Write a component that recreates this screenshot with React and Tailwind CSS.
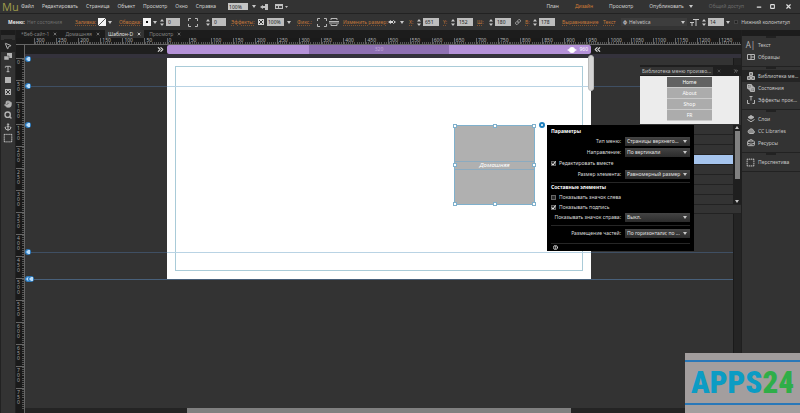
import { useState } from 'react';
import {
  Anchor,
  BriefcaseBusiness,
  ChevronsLeft,
  ChevronsRight,
  CircleHelp,
  Hand,
  Link,
  Minus,
  MousePointer2,
  Search,
  Square,
  SquareDashed,
  Type,
  X,
} from 'lucide-react';

const menuItems = ['Файл', 'Редактировать', 'Страница', 'Объект', 'Просмотр', 'Окно', 'Справка'];

const horizontalMarks = Array.from({ length: 32 }, (_, i) => Math.abs(i * 50 - 300));
const verticalMarks = Array.from({ length: 16 }, (_, i) => i * 50);

const Caret = () => (
  <svg viewBox="0 0 4 3" className="w-1 h-[3px] shrink-0" fill="#c8c8c8">
    <path d="M0 0h4L2 3z" />
  </svg>
);

const Stepper = () => (
  <svg viewBox="0 0 4 7" className="w-1 h-[7px] shrink-0" fill="#c8c8c8">
    <path d="M0 2.5L2 0l2 2.5zM0 4.5L2 7l2-2.5z" />
  </svg>
);

const Corners = () => (
  <svg viewBox="0 0 10 9" className="w-[10px] h-[9px] shrink-0" fill="none" stroke="#b8b8b8">
    <path d="M.5 3V.5H3M7 .5h2.5V3M9.5 6v2.500H7M3 8.500H.5V6" />
  </svg>
);

const NumberField = ({ label, value, width = 'w-4' }) => (
  <span className="flex items-center gap-[2px]">
    <Stepper />
    <input
      type="text"
      aria-label={label}
      defaultValue={value}
      className={`${width} h-2 bg-[#bdbdbd] text-[#222] px-[2px] leading-none outline-none`}
    />
  </span>
);

const Swatch = ({ label, children }) => (
  <button type="button" aria-label={label} className="flex items-center gap-[2px]">
    <svg viewBox="0 0 8 8" className="size-2" fill="#f4f4f4">
      <path d="M0 0h8v8H0z" />
      {children}
    </svg>
    <Caret />
  </button>
);

const OrangeLink = ({ className = '', children }) => (
  <a href="#" className={`text-[#c4773a] underline decoration-dotted decoration-[#80522f] shrink-0 ${className}`}>
    {children}
  </a>
);

const MenuBar = () => (
  <header className="h-[14px] flex items-center bg-[#333] border-b border-[#222] text-[#d0d0d0]">
    <span className="w-[21px] pl-[2px] text-[11px] leading-none text-[#98964a]">Mu</span>
    <nav className="flex gap-2">
      {menuItems.map((item) => (
        <button key={item} type="button">{item}</button>
      ))}
    </nav>
    <div className="flex items-center gap-1 ml-3">
      <input
        type="text"
        aria-label="Масштаб"
        defaultValue="100%"
        className="w-5 h-[7px] bg-[#c4c4c4] text-[#222] px-[1px] leading-none outline-none"
      />
      <Caret />
      <svg viewBox="0 0 32 6" className="w-8 h-[6px]" fill="#c0c0c0">
        <path d="M0 3l3-2v4zM3 2h2v2H3zM5 0h3v6H5zM15 0h8v5h-8zM25 2h3l-1.500 2z" />
        <path d="M16 2h2v2h-2zM19 2h3v2h-3z" fill="#444" />
      </svg>
    </div>
    <nav className="flex items-center gap-4 ml-auto">
      <button type="button">План</button>
      <button type="button" className="text-[#d07c36]">Дизайн</button>
      <button type="button">Просмотр</button>
      <button type="button" className="flex items-center gap-[5px]">
        Опубликовать
        <Caret />
      </button>
      <button type="button" disabled className="text-[#6c6c6c]">Общий доступ</button>
    </nav>
    <div className="flex items-center gap-2 ml-3 pr-2 text-[#e0e0e0]">
      <button type="button" aria-label="Свернуть"><Minus size={6} strokeWidth={5} /></button>
      <button type="button" aria-label="Развернуть"><Square size={5} strokeWidth={5} /></button>
      <button type="button" aria-label="Закрыть" className="pl-[2px]"><X size={7} strokeWidth={4} /></button>
    </div>
  </header>
);

const OptionsBar = () => (
  <div className="h-4 flex items-center bg-[#333] text-[#c4c4c4] pl-2 overflow-hidden">
    <b className="w-[19px] text-[#e8e8e8]">Меню:</b>
    <span className="w-12 text-[#6c6c6c]">Нет состояния</span>
    <OrangeLink className="w-[23px]">Заливка:</OrangeLink>
    <Swatch label="Заливка">
      <path d="M0 8L8 0" stroke="#555" />
    </Swatch>
    <OrangeLink className="w-6 ml-[7px]">Обводка:</OrangeLink>
    <Swatch label="Обводка">
      <path d="M3 3h2v2H3z" fill="#111" />
    </Swatch>
    <div className="flex items-center gap-2 ml-[3px]">
      <NumberField label="Толщина обводки" value="0" width="w-[14px]" />
      <Corners />
      <NumberField label="Радиус угла" value="0" width="w-[14px]" />
    </div>
    <OrangeLink className="w-[27px] ml-[5px]">Эффекты:</OrangeLink>
    <svg viewBox="0 0 6 6" className="size-[6px]" fill="#d0d0d0">
      <path d="M0 0h6v6H0z" />
      <path d="M1 1h1v1H1zM4 1h1v1H4zM2 2h2v2H2zM1 4h1v1H1zM4 4h1v1H4z" fill="#333" />
    </svg>
    <input
      type="text"
      aria-label="Непрозрачность"
      defaultValue="100%"
      className="w-[17px] h-2 mx-[3px] bg-[#bdbdbd] text-[#222] px-[1px] leading-none outline-none"
    />
    <Caret />
    <OrangeLink className="w-5 ml-[6px]">Фикс.:</OrangeLink>
    <Corners />
    <svg viewBox="0 0 10 8" className="w-[10px] h-2 ml-[2px]" fill="none" stroke="#b8b8b8">
      <path d="M2 2V.5h6V2M2 6v1.500h6V6M0 3.500h10M0 5h10" />
    </svg>
    <OrangeLink className="w-[45px] ml-1">Изменить размер:</OrangeLink>
    <button type="button" aria-label="Изменить размер" className="flex items-center gap-1 w-[21px]">
      <svg viewBox="0 0 8 6" className="w-2 h-[6px]" fill="#d8d8d8">
        <path d="M0 3l3-2v4zM8 3L5 1v4zM2 2h4v2H2z" />
      </svg>
      <Caret />
    </button>
    <OrangeLink className="w-2">X:</OrangeLink>
    <NumberField label="X" value="651" />
    <OrangeLink className="w-2 ml-1">Y:</OrangeLink>
    <NumberField label="Y" value="152" />
    <OrangeLink className="w-3 ml-1">Ш:</OrangeLink>
    <NumberField label="Ширина" value="180" />
    <Link size={6} strokeWidth={3} className="mx-1 shrink-0" />
    <OrangeLink className="w-2">В:</OrangeLink>
    <NumberField label="Высота" value="178" />
    <OrangeLink className="w-[41px] ml-[7px]">Выравнивание</OrangeLink>
    <OrangeLink className="w-[18px]">Текст</OrangeLink>
    <label className="flex items-center h-2 w-[66px] bg-[#3d3d3d] pr-[2px]">
      <b className="px-[2px]">ф</b>
      <select aria-label="Шрифт" className="appearance-none flex-1 min-w-0 leading-none outline-none">
        <option>Helvetica</option>
      </select>
      <Caret />
    </label>
    <svg viewBox="0 0 9 7" className="w-[9px] h-[7px] mx-[3px] shrink-0" fill="none" stroke="#c8c8c8">
      <path d="M0 3.500h4M2 3v4M3 .5h6M6 0v7" />
    </svg>
    <NumberField label="Кегль" value="14" />
    <span className="pl-[2px]"><Caret /></span>
    <label className="flex items-center gap-[3px] ml-auto pr-[10px] shrink-0">
      <input type="checkbox" className="appearance-none size-1 bg-[#222] border border-[#444]" />
      Нижний колонтитул
    </label>
  </div>
);

const tools = [
  { name: 'Выделение', icon: <MousePointer2 size={8} strokeWidth={3} /> },
  {
    name: 'Кадрирование',
    icon: (
      <svg viewBox="0 0 8 8" className="size-2" fill="currentColor">
        <path d="M3 0h5v5H3z" />
        <path d="M0 3h5v4H0z" stroke="#333" strokeWidth=".5" />
      </svg>
    ),
  },
  { name: 'Текст', icon: <Type size={8} strokeWidth={3} /> },
  {
    name: 'Прямоугольник',
    icon: (
      <svg viewBox="0 0 8 6" className="w-2 h-[6px]" fill="currentColor">
        <path d="M1 0h6v6H1z" />
      </svg>
    ),
  },
  {
    name: 'Фрейм',
    icon: (
      <svg viewBox="0 0 8 6" className="w-2 h-[6px]">
        <path d="M1 0h6v6H1z" fill="currentColor" />
        <path d="M2 1l4 4M6 1L2 5" stroke="#333" />
      </svg>
    ),
  },
  { name: 'Рука', icon: <Hand size={8} fill="currentColor" /> },
  { name: 'Лупа', icon: <Search size={8} strokeWidth={4} /> },
  { name: 'Якорь', icon: <Anchor size={8} strokeWidth={3} /> },
  { name: 'Виджет', icon: <SquareDashed size={10} strokeWidth={3} /> },
];

const Toolbar = () => {
  const [active, setActive] = useState('Выделение');

  return (
    <aside className="w-4 shrink-0 bg-[#333] border-x border-[#222]">
      <div className="h-[5px] bg-[#1c1c1c]" />
      <div className="h-[5px] mx-[3px] border-b border-[#222]" />
      <div className="h-[104px] flex flex-col">
        {tools.map((tool) => (
          <button
            key={tool.name}
            type="button"
            aria-label={tool.name}
            onClick={() => setActive(tool.name)}
            className={`flex-1 flex items-center justify-center text-[#b4b4b4] ${
              active === tool.name ? 'bg-[#222]' : ''
            }`}
          >
            {tool.icon}
          </button>
        ))}
      </div>
    </aside>
  );
};

const tabs = ['*Веб-сайт-1', 'Домашняя', 'Шаблон-D', 'Просмотр'];

const Tabs = () => (
  <div className="h-2 flex gap-[2px] pl-[2px] bg-[#1c1c1c]">
    {tabs.map((tab) => (
      <button
        key={tab}
        type="button"
        className={`flex items-center gap-1 px-[3px] ${
          tab === 'Шаблон-D' ? 'bg-[#333] text-[#e0e0e0]' : 'text-[#808080]'
        }`}
      >
        {tab}
        <X size={4} strokeWidth={5} />
      </button>
    ))}
  </div>
);

const HorizontalRuler = () => (
  <div className="h-[7px] flex pl-[18px] bg-[#1a1a1a] border-b border-[#666]">
    {horizontalMarks.map((mark, i) => (
      <div key={i} className="flex-1 min-w-0 flex flex-col justify-between border-l border-[#666]">
        <span className="h-1 pl-px leading-[4px] text-[#b0b0b0]">{mark}</span>
        <span className="h-[2px] bg-[repeating-linear-gradient(90deg,#555_0_1px,transparent_1px_10%)]" />
      </div>
    ))}
  </div>
);

const VerticalRuler = () => (
  <div className="w-[9px] shrink-0 bg-[#1a1a1a] border-r border-[#666] pt-[13px]">
    {verticalMarks.map((mark) => (
      <div key={mark} className="h-[22px] flex justify-between border-t border-[#666]">
        <span className="w-[5px] pt-px pl-px leading-[5px] text-[#a0a0a0] whitespace-normal break-all">
          {mark}
        </span>
        <span className="w-[2px] bg-[repeating-linear-gradient(180deg,#555_0_1px,transparent_1px_10%)]" />
      </div>
    ))}
  </div>
);

const Breakpoints = () => (
  <div className="h-[9px] flex items-center bg-[#1f1f1f] text-[#d8d8d8]">
    <div className="w-[142px] shrink-0 flex justify-end pr-[2px]">
      <ChevronsRight size={9} strokeWidth={3} />
    </div>
    <div className="w-[424px] shrink-0 h-full flex rounded-[2px] overflow-hidden bg-[#b491d8]">
      <div className="w-[140px] ml-[142px] flex items-center justify-center bg-[#8e70b2] text-[#c3aadc]">
        320
      </div>
      <div className="flex-1 flex items-center justify-end gap-[2px] pr-[3px] text-white">
        <svg viewBox="0 0 10 6" className="w-[10px] h-[6px]" fill="#fff">
          <path d="M0 3l2-1v2zM10 3L8 2v2z" />
          <circle cx="5" cy="3" r="3" />
        </svg>
        960
      </div>
    </div>
    <ChevronsLeft size={9} strokeWidth={3} className="ml-[2px]" />
  </div>
);

const GuideHandle = ({ className }) => (
  <svg viewBox="0 0 6 6" className={`absolute size-[6px] -translate-y-1/2 ${className}`}>
    <circle cx="3" cy="3" r="3" fill="#2f7fc4" />
    <path d="M1 3l2-2h2v4H3z" fill="#b8dcfa" />
  </svg>
);

const handles = [
  'left-0 top-0',
  'left-1/2 top-0',
  'left-full top-0',
  'left-0 top-1/2',
  'left-full top-1/2',
  'left-0 top-full',
  'left-1/2 top-full',
  'left-full top-full',
];

const SelectedWidget = () => (
  <div className="absolute left-[287px] top-[67px] w-[81px] h-20 flex flex-col justify-center border border-[#7fb0cc] bg-[#b0b0b0]">
    <div className="h-[9px] flex items-center justify-center border-y border-[#8cabc0] text-[6px] italic text-white">
      Домашняя
    </div>
    {handles.map((place) => (
      <span
        key={place}
        className={`absolute size-1 -translate-1/2 bg-white border border-[#7fb0cc] ${place}`}
      />
    ))}
    <span className="absolute -top-1 -right-[11px] size-[6px] rounded-full bg-white border-2 border-[#1f7fbd]" />
  </div>
);

const SelectRow = ({ label, value, className = '' }) => (
  <label className={`flex items-center justify-end gap-1 h-[11px] ${className}`}>
    {label}
    <span className="w-[65px] h-[9px] flex items-center bg-linear-to-b from-[#444] to-[#2c2c2c] pl-[2px] pr-[3px]">
      <select className="appearance-none flex-1 min-w-0 leading-none text-[#e0e0e0] outline-none">
        <option>{value}</option>
      </select>
      <Caret />
    </span>
  </label>
);

const CheckRow = ({ label, checked }) => (
  <label className="flex items-center gap-[3px] h-[10px]">
    <span className="grid size-[5px]">
      <input
        type="checkbox"
        defaultChecked={checked}
        className="peer appearance-none col-start-1 row-start-1 size-[5px] bg-[#2a2a2a] border border-[#666]"
      />
      <svg
        viewBox="0 0 5 5"
        className="hidden peer-checked:block col-start-1 row-start-1 size-[5px] pointer-events-none"
        fill="none"
        stroke="#fff"
      >
        <path d="M1 2.500l1 1.500L4.500.5" />
      </svg>
    </span>
    {label}
  </label>
);

const OptionsPopup = () => (
  <div className="absolute left-[522px] top-[67px] w-[147px] bg-black text-[#dcdcdc] px-1 pt-[2px] z-20">
    <h2 className="h-[9px] flex items-center font-bold text-white">Параметры</h2>
    <SelectRow label="Тип меню:" value="Страницы верхнего..." />
    <SelectRow label="Направление:" value="По вертикали" />
    <CheckRow label="Редактировать вместе" checked />
    <SelectRow label="Размер элемента:" value="Равномерный размер" className="mt-px" />
    <hr className="border-[#262626] mt-[2px]" />
    <h2 className="h-[9px] flex items-center font-bold text-white">Составные элементы</h2>
    <CheckRow label="Показывать значок слева" />
    <CheckRow label="Показывать подпись" checked />
    <SelectRow label="Показывать значок справа:" value="Выкл." />
    <hr className="border-[#262626] my-[2px]" />
    <SelectRow label="Размещение частей:" value="По горизонтали; по ..." />
    <hr className="border-[#262626] mt-1 mb-px" />
    <button type="button" aria-label="Справка" className="block pl-[2px] pb-px">
      <CircleHelp size={5} strokeWidth={4} />
    </button>
  </div>
);

const LibraryPanel = () => (
  <section className="absolute right-0 top-[7px] w-[101px] bg-[#333] z-10">
    <header className="h-[11px] flex items-center bg-[#1f1f1f] text-[#c0c0c0]">
      <h2 className="h-2 px-[2px] bg-[#333] leading-[8px]">Библиотека меню произво...</h2>
      <X size={4} strokeWidth={4} className="ml-1 text-[#666]" />
      <ChevronsRight size={6} className="ml-auto mr-[2px]" />
    </header>
    <div className="bg-[#ececec] mr-[2px] px-[27px] py-px h-12">
      {['Home', 'About', 'Shop', 'FR'].map((item) => (
        <div
          key={item}
          className={`h-[11px] flex items-center justify-center border-b border-[#ccc] text-white ${
            item === 'Home' ? 'bg-[#626262]' : 'bg-[#acacac]'
          }`}
        >
          {item}
        </div>
      ))}
    </div>
    <div className="flex h-[80px] pt-px">
      <ul className="flex-1">
        {[0, 1, 2, 3, 4, 5, 6].map((row) => (
          <li
            key={row}
            className={`h-[10px] border-b border-[#222] ${row === 3 ? 'bg-[#a6c5ee]' : ''}`}
          />
        ))}
      </ul>
      <div className="w-2 flex flex-col items-center justify-between bg-[#1f1f1f] py-px">
        <span className="rotate-180"><Caret /></span>
        <span className="w-[5px] h-12 mb-auto mt-[2px] bg-[#808080]" />
        <Caret />
      </div>
    </div>
    <footer className="h-[10px] border-y border-[#222]" />
  </section>
);

const Canvas = () => (
  <div className="relative flex-1 min-h-0 bg-[#333]">
    <div className="absolute inset-x-0 top-[28px] border-t border-[#3f4f63]" />
    <div className="absolute inset-x-0 top-[194px] border-t border-[#3f4f63]" />
    <div className="absolute inset-x-0 top-[221px] border-t border-[#48607a]" />
    <div className="relative ml-[142px] w-[424px] h-[221px] bg-white p-2">
      <div className="h-full border border-[#a9cbd8]" />
      <div className="absolute inset-x-0 top-[28px] border-t border-[#b9d3e4]" />
      <div className="absolute inset-x-0 top-[194px] border-t border-[#b9d3e4]" />
      <SelectedWidget />
      <span className="absolute -right-[3px] -top-[3px] w-[6px] h-9 rounded-full bg-[#d4d4d4] border border-[#bbb]" />
    </div>
    <GuideHandle className="left-0 top-px" />
    <GuideHandle className="left-0 top-[28px]" />
    <GuideHandle className="left-0 top-[67px]" />
    <GuideHandle className="left-0 top-[194px]" />
    <GuideHandle className="left-0 top-[221px]" />
    <GuideHandle className="left-[3px] top-[221px]" />
    <OptionsPopup />
  </div>
);

const DockIcon = ({ children }) => (
  <svg viewBox="0 0 8 8" className="size-2" fill="none" stroke="currentColor">
    {children}
  </svg>
);

const dockGroups = [
  [
    { label: 'Текст', icon: <b className="text-[8px] leading-none font-normal">A|</b> },
    {
      label: 'Образцы',
      icon: <DockIcon><path d="M.5 1.500h7v5h-7zM4 1.500v5M4 4h3.500" /></DockIcon>,
    },
  ],
  [
    {
      label: 'Библиотека ме...',
      icon: <DockIcon><path d="M2.500.5h3v3h-3zM.5 4.500h3v3h-3zM4.500 4.500h3v3h-3z" fill="#777" /></DockIcon>,
      active: true,
    },
    {
      label: 'Состояния',
      icon: <DockIcon><path d="M.5.500h4v4h-4zM2 2h4v4H2zM3.500 3.500h4v4h-4z" fill="#777" /></DockIcon>,
    },
    {
      label: 'Эффекты прок...',
      icon: <DockIcon><path d="M2.500.5h3M4 .5v4M.5 4v3.500h2M7.500 4v3.500h-2" /></DockIcon>,
    },
  ],
  [
    {
      label: 'Слои',
      icon: <DockIcon><path d="M4 .5l3 1.800-3 1.800-3-1.800z" fill="currentColor" /><path d="M.5 4.500L4 6.800l3.500-2.300" /></DockIcon>,
    },
    {
      label: 'CC Libraries',
      icon: (
        <DockIcon>
          <path d="M2.500 6.500a2 2 0 0 1 0-3.800 2.300 2.300 0 0 1 4 .8 1.600 1.600 0 0 1-.5 3z" fill="#8c8c8c" />
        </DockIcon>
      ),
    },
    { label: 'Ресурсы', icon: <BriefcaseBusiness size={8} strokeWidth={3} /> },
  ],
  [{ label: 'Перспектива', icon: <SquareDashed size={9} strokeWidth={3} /> }],
];

const Dock = () => (
  <aside className="w-[59px] shrink-0 bg-[#333] border-l border-[#1f1f1f]">
    <div className="h-[6px] bg-[#1c1c1c]" />
    {dockGroups.map((group, i) => (
      <div key={i} className="pb-[3px] border-b border-[#222]">
        <div className="h-[2px] w-[10px] ml-6 mb-px bg-[#222]" />
        {group.map((item) => (
          <button
            key={item.label}
            type="button"
            className={`w-full h-3 flex items-center gap-[3px] px-1 text-left text-[#c4c4c4] ${
              item.active ? 'bg-[#242424]' : ''
            }`}
          >
            <span className="w-[9px] shrink-0 flex justify-center text-[#b4b4b4]">{item.icon}</span>
            {item.label}
          </button>
        ))}
      </div>
    ))}
  </aside>
);

const Watermark = () => (
  <div className="fixed right-0 bottom-0 w-[115px] h-[60px] pt-[7px] bg-[#a39e9e] z-30">
    <div className="h-[45px] flex items-center justify-center border-y-2 border-[#2a78b8] font-['Roboto_Condensed','Noto_Sans_Condensed','Open_Sans_Condensed',Roboto,sans-serif] font-black text-[31px] leading-none">
      <span className="text-[#0c9cc4]">APPS</span>
      <span className="text-[#2fae48]">24</span>
    </div>
  </div>
);

export default function App() {
  return (
    <div className="h-screen flex flex-col overflow-hidden bg-[#333] font-['Noto_Sans','Open_Sans',sans-serif] text-[5px] leading-[7px] whitespace-nowrap">
      <MenuBar />
      <OptionsBar />
      <div className="flex-1 min-h-0 flex">
        <Toolbar />
        <main className="flex-1 min-w-0 flex flex-col">
          <Tabs />
          <HorizontalRuler />
          <div className="flex-1 min-h-0 flex">
            <VerticalRuler />
            <div className="relative flex-1 min-w-0 flex flex-col">
              <Breakpoints />
              <div className="relative flex-1 min-h-0 flex flex-col border-t-4 border-[#34323c]">
                <div className="flex-1 min-h-0 flex">
                  <Canvas />
                  <div className="w-2 bg-[#242424] border-l border-[#1a1a1a]" />
                </div>
                <LibraryPanel />
              </div>
              <div className="h-[5px] pl-[162px] bg-[#242424]">
                <div className="h-full w-[384px] bg-[#808080]" />
              </div>
            </div>
          </div>
        </main>
        <Dock />
      </div>
      <Watermark />
    </div>
  );
}
